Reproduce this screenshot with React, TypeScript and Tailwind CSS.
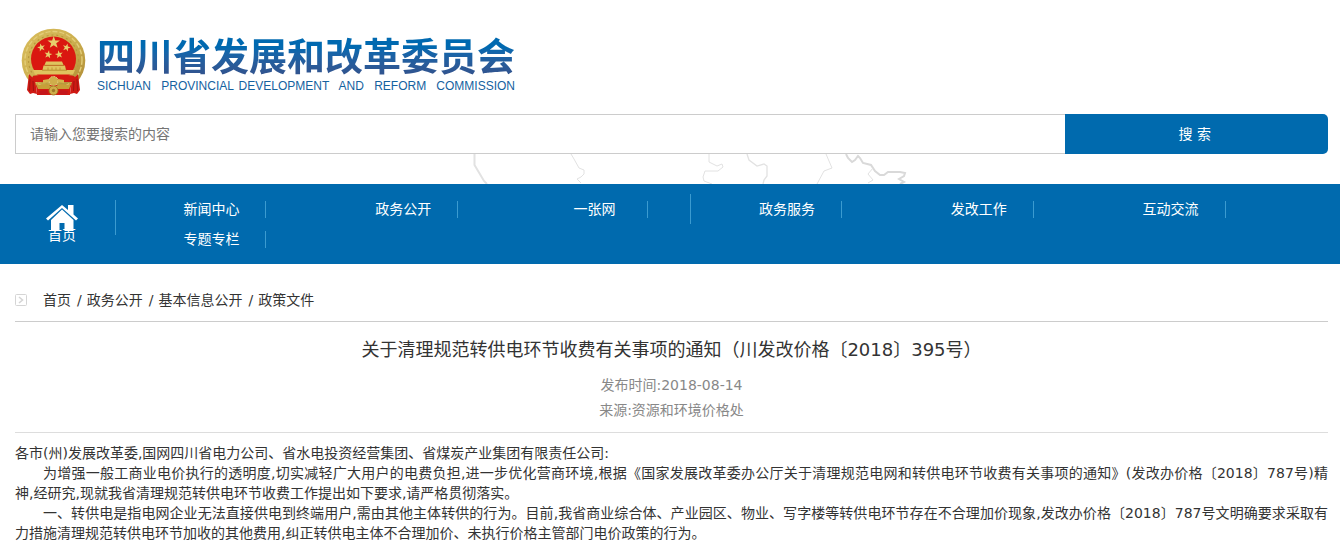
import React from 'react';

const navItems = [
  { label: '新闻中心', padding: 'px-[26px]' },
  { label: '政务公开', padding: 'px-[26px]' },
  { label: '一张网', padding: 'px-[31px]', divider: true },
  { label: '政务服务', padding: 'px-[26px]' },
  { label: '发改工作', padding: 'px-[26px]' },
  { label: '互动交流', padding: 'px-[26px]' },
  { label: '专题专栏', padding: 'px-[26px]' }
];

const crumbs = ['首页', '政务公开', '基本信息公开', '政策文件'];

const STAR = 'M0-10 2.4-3.1 9.5-3.1 3.8 1.2 5.9 8.1 0 4 -5.9 8.1 -3.8 1.2 -9.5-3.1 -2.4-3.1Z';

const Emblem: React.FC = () => (
  <svg className="w-[66px] h-[68px] shrink-0" viewBox="0 0 66 68" aria-hidden="true">
    <defs>
      <linearGradient id="gold" x1="0" y1="0" x2="1" y2="1">
        <stop offset="0" stopColor="#d9bd5c" />
        <stop offset="0.5" stopColor="#cdb050" />
        <stop offset="1" stopColor="#ab8630" />
      </linearGradient>
    </defs>
    <circle cx="32.5" cy="32.5" r="31.8" fill="url(#gold)" />
    <circle cx="32.5" cy="32" r="28.5" fill="none" stroke="#e3cd78" strokeWidth="1.4" strokeDasharray="5 2" />
    <circle cx="32.5" cy="32" r="25" fill="none" stroke="#b8973d" strokeWidth="1.2" strokeDasharray="2 3" />
    <circle cx="32.5" cy="31" r="22.5" fill="#da1710" />
    <g fill="#e7ce6c">
      <path d={STAR} transform="translate(32.7 14.5) scale(.66)" />
      <path d={STAR} transform="translate(20.3 19.5) rotate(-15) scale(.42)" />
      <path d={STAR} transform="translate(27.3 26.5) rotate(10) scale(.42)" />
      <path d={STAR} transform="translate(38 26.5) rotate(-10) scale(.42)" />
      <path d={STAR} transform="translate(45.5 19.5) rotate(15) scale(.42)" />
    </g>
    {/* Gate */}
    <path d="M25 33.5H41L42.5 37H23.5Z M22.5 37.5H44L45 42H21.5Z M12 42H54L52 46.5H14Z" fill="#dfc35e" />
    <path d="M24 37.3H43M21 42.2H46" stroke="#a7801f" strokeWidth=".7" />
    <path d="M27 39.5V42M31 39.5V42M35 39.5V42M39 39.5V42" stroke="#b88f2c" strokeWidth=".8" />
    {/* Ribbons and gear */}
    <path d="M12 48C20 45.5 26 50 32.5 50S45 45.5 53 48L57 54H9Z" fill="#d41a12" />
    <path d="M8 46L14 52 16 66 12 65 9 66 6 62Z M57 46L51 52 49 66 53 65 56 66 59 62Z" fill="#cf1913" />
    <path d="M9 51L8.5 63M12 53L12.5 63M56 51L56.5 63M53 53L52.5 63" stroke="#931410" strokeWidth=".8" />
    <path d="M15 57H50L49 67H16Z" fill="#d41a12" />
    <path d="M15 56C21 58 24 55 28 57C31 59 34 59 37 57C41 55 44 58 50 56L48 61H17Z" fill="#c79f38" />
    <circle cx="32.5" cy="53" r="4.6" fill="#cfae4b" stroke="#e7d587" strokeWidth="1" strokeDasharray="2 1" />
    <path d="M22 52L28 51 28 54 22 55Z M43 52L37 51 37 54 43 55Z" fill="#d5b44c" />
    <circle cx="32.5" cy="62.5" r="4.5" fill="#cfae4b" stroke="#9a741d" strokeWidth=".8" />
    <circle cx="32.5" cy="62.5" r="1.7" fill="#9d7a28" />
    <path d="M18 63L26 62 27 66 19 67Z M47 63L39 62 38 66 46 67Z" fill="#c4161c" />
  </svg>
);

// Province outline showing through between the search box and the nav
const MapStrip: React.FC = () => (
  <svg className="block mx-auto w-[480px] h-[30px]" viewBox="-30 0 480 30" fill="none" stroke="#e2e2e2" aria-hidden="true">
    <path d="M14.5 0V11L24 27 27 30" strokeWidth="2" />
    <path d="M111 0L114 5 119 14 124 16 124 20 121 23 117 25 121 29" />
    <path d="M249 0V8L257 12 262 10 263 13 258 17 245 17 243 23 244 27 252 30" />
    <path d="M287 0L289 6 297 12 304 10 307 12 307 22 304 26 303 30" strokeWidth="1.3" />
    <path d="M366 0L372 14 364 17 357 30" />
    <path d="M386 0L388 4 392 8 395 6 398 2 400 4 403 9 411 11 415 17 420 21 424 21 428 18 440 18 445 19 444 22 439 25 444 28 440 30" stroke="#d9d9d9" strokeWidth="2" />
    <path d="M413 14L408 20 413 26 408 29" />
  </svg>
);

const App: React.FC = () => {
  return (
    <div className="min-h-screen bg-white text-[#333] text-sm leading-5 font-['DejaVu_Sans','Noto_Sans_CJK_SC',sans-serif]">
      <header>
        <a href="#" className="flex w-fit ml-[21px] pt-7 gap-[10px] text-[#15629f]">
          <Emblem />
          <div className="pt-[6px]">
            <h1 className="h-11 text-[38px] leading-[40px] font-bold font-['Noto_Sans_CJK_SC',sans-serif] bg-linear-to-b from-[#0069b0] from-30% to-[#30548f] to-90% bg-clip-text text-transparent">
              四川省发展和改革委员会
            </h1>
            <p className="text-xs leading-4 whitespace-pre-wrap [text-align-last:justify] font-['Liberation_Sans',sans-serif]">
              {'SICHUAN  PROVINCIAL DEVELOPMENT  AND  REFORM  COMMISSION'}
            </p>
          </div>
        </a>

        <form className="flex mt-[18px] ml-[15px] mr-3 h-10" onSubmit={(e) => e.preventDefault()}>
          <input
            type="text"
            aria-label="搜索"
            placeholder="请输入您要搜索的内容"
            className="w-4/5 px-[14px] border border-r-0 border-[#ccc] bg-white placeholder:text-[#757575] outline-none"
          />
          <button type="submit" className="w-1/5 pr-1 bg-[#006aae] text-white rounded-r-[5px] whitespace-pre">
            搜 索
          </button>
        </form>
        <MapStrip />
      </header>

      <nav className="flex bg-[#006aae] text-white py-[10px]">
        <a href="#" className="flex flex-col items-center w-[105px] h-[35px] pr-[2px] ml-[11px] mt-[6px] border-r border-[#3b9bd0]">
          <svg className="w-8 h-[26px] mt-[5px] shrink-0" viewBox="0 0 32 26" fill="white" aria-hidden="true">
            <path d="M16 0L22 5V0H27.5V9.5L32 13.5 30 15.5 16 3 2 15.5 0 13.5Z" />
            <path d="M16 4.6L27.5 15V26H18.5V18H13.5V26H5V15Z" />
          </svg>
          <span className="-mt-[6px]">首页</span>
        </a>
        <ul className="grid grid-cols-6 flex-1 pr-[73px]">
          {navItems.map((item) => (
            <li
              key={item.label}
              className={`flex items-center justify-center h-[30px] ${item.divider ? 'border-r border-[#3b9bd0]' : ''}`}
            >
              <a href="#" className={`border-r border-[#3b9bd0] leading-[17px] ${item.padding}`}>
                {item.label}
              </a>
            </li>
          ))}
        </ul>
      </nav>

      <main className="ml-[15px] mr-3">
        <div className="flex items-center h-[58px] pt-[14px] border-b border-[#ccc]">
          <svg className="w-3 h-3 mr-4" viewBox="0 0 12 12" fill="none" stroke="#d5d5d5" aria-hidden="true">
            <rect x=".5" y=".5" width="11" height="11" rx="1" />
            <path d="M4 3L7.5 6 4 9" strokeWidth="1.6" />
          </svg>
          <ol className="flex gap-[6px]">
            {crumbs.map((crumb, index) => (
              <li key={crumb} className="flex gap-[5px]">
                {index > 0 && <span>/</span>}
                <a href="#">{crumb}</a>
              </li>
            ))}
          </ol>
        </div>

        <article>
          <div className="text-center pt-3 pb-[9px] border-b border-[#ddd]">
            <h2 className="text-lg leading-8 mb-[7px]">
              关于清理规范转供电环节收费有关事项的通知（川发改价格〔2018〕395号）
            </h2>
            <p className="leading-[25px] text-[#888]">发布时间:2018-08-14</p>
            <p className="leading-[25px] text-[#888]">来源:资源和环境价格处</p>
          </div>

          <div className="pt-[10px] text-justify">
            <p>各市(州)发展改革委,国网四川省电力公司、省水电投资经营集团、省煤炭产业集团有限责任公司:</p>
            <p className="indent-7">
              为增强一般工商业电价执行的透明度,切实减轻广大用户的电费负担,进一步优化营商环境,根据《国家发展改革委办公厅关于清理规范电网和转供电环节收费有关事项的通知》(发改办价格〔2018〕787号)精<span className="whitespace-nowrap">神,经研究</span>,现就我省清理规范转供电环节收费工作提出如下要求,请严格贯彻落实。
            </p>
            <p className="indent-7">
              一、转供电是指电网企业无法直接供电到终端用户,需由其他主体转供的行为。目前,我省商业综合体、产业园区、物业、写字楼等转供电环节存在不合理加价现象,发改办价格〔2018〕787号文明确要求采取有力措施清理规范转供电环节加收的其他费用,纠正转供电主体不合理加价、未执行价格主管部门电价政策的行为。
            </p>
          </div>
        </article>
      </main>
    </div>
  );
};

export default App;
